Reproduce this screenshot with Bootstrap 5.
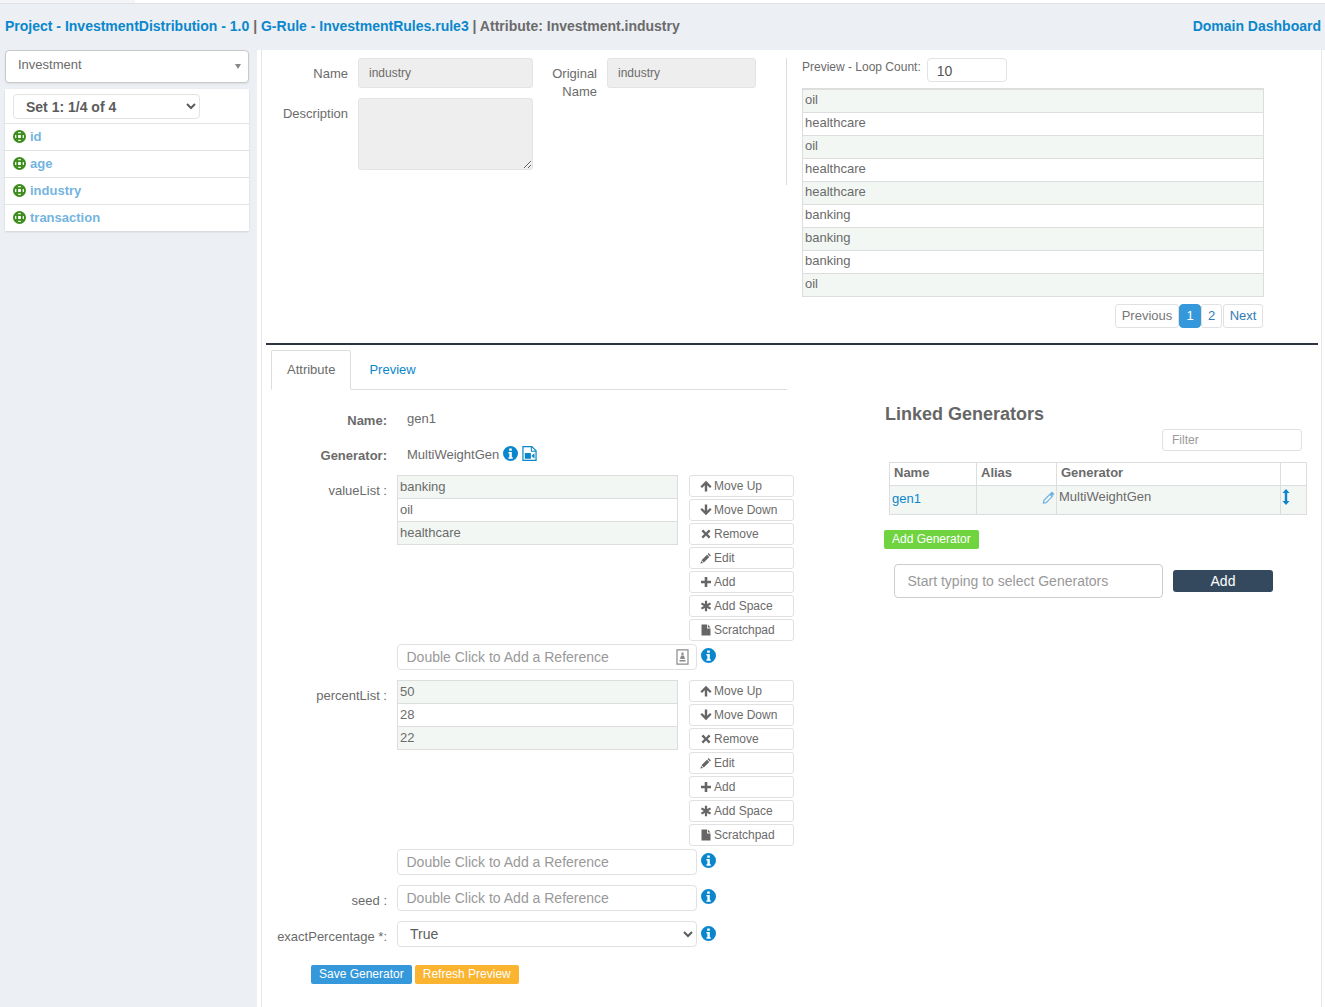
<!DOCTYPE html>
<html lang="en">
<head>
<meta charset="utf-8">
<title>G-Rule</title>
<link rel="stylesheet" href="https://cdn.jsdelivr.net/npm/bootstrap@5.3.0/dist/css/bootstrap.min.css">
<style>
html,body{height:1007px;overflow:hidden}
body{background:#eceff4;font-family:"Liberation Sans",Arial,sans-serif;font-size:13px;color:#6b6b6b;display:flex;flex-direction:column}
a{color:#0a87cc;text-decoration:none}
.strip{height:4px;background:#fff;border-bottom:1px solid #dfe1e4;flex:none}
.strip-tab{width:135px;height:3px;background:#f3f5f8}
.head{height:46px;flex:none;padding:0 4px 2px 5px;font-size:14px;font-weight:700;color:#6b6b6b}
.shell{flex:1;min-height:0}
.side{width:257px;flex:none;padding-left:5px}
.pick{width:244px;height:33px;background:#fff;border:1px solid #c9c9c9;border-radius:4px;padding:0 12px 3px;font-size:13px;box-shadow:0 1px 2px rgba(0,0,0,.08)}
.caret{width:0;height:0;border-left:3px solid transparent;border-right:3px solid transparent;border-top:5px solid #888;margin:3px -5px 0 0}
.attrs{width:244px;margin-top:6px;background:#fff;box-shadow:0 1px 2px rgba(0,0,0,.12)}
.attrs .sel-wrap{height:34px;padding:5px 8px}
.attrs select{width:187px;height:25px;font-size:14px;font-weight:700;color:#5c5c5c;padding:0 0 0 8px;border:1px solid #e3e3e3;border-radius:4px;appearance:auto;background-image:none}
.attr{height:27px;border-top:1px solid #e2e2e2;padding-left:8px;font-weight:700;font-size:13px;gap:4px}
.attr a{color:#74b4e0}
.attr svg{color:#3c8c1c;width:13px;height:13px;margin-top:-2px}
.main{flex:1;background:#fff;padding:0 3px 0 4px;min-width:0}
.inner{height:100%;border-left:1px solid #e7e7e7;border-right:1px solid #e7e7e7}
.top{height:293px;padding-top:8px}
.meta{width:525px;height:127px;border-right:1px solid #ddd;display:grid;grid-template-columns:86px 175px 54px 149px;column-gap:10px;row-gap:10px;grid-template-rows:30px 72px;align-content:start}
.lab{text-align:right;padding-top:7px;line-height:18px}
.ro{background:#eee;border:1px solid #e3e3e3;border-radius:3px;padding:0 10px;font-size:12px;color:#6b6b6b;height:30px;line-height:28px;width:100%}
textarea.ro{height:72px;display:block}
.prev{padding-left:15px;width:477px}
.prev-lab{font-size:12px;gap:6px;height:30px;align-items:flex-start}
.count{width:80px;height:24px;padding:2px 9px 0;font-size:14px;border:1px solid #e3e3e3;border-radius:4px;color:#555}
.dat{width:100%;margin:0;border-collapse:collapse;font-size:13px;color:#6b6b6b;background:#fff}
.dat td{height:23px;padding:0 2px 1px;border:1px solid #ddd;line-height:20px}
.dat tr:nth-child(odd) td{background:#f2f7f4}
.dat tr:first-child td{border-top-width:2px}
.pg{margin:7px 1px 0 0;justify-content:flex-end;--bs-pagination-font-size:13px}
.pg .page-item .page-link{padding:0;height:24px;line-height:22px;border:1px solid #e1e1e1;border-radius:3px;color:#337ab7;margin-left:0;text-align:center}
.pg .disabled .page-link{width:64px}
.pg .page-item.disabled .page-link{color:#777;background:#fff}
.pg .page-item.active .page-link{background:#3498db;border-color:#3498db;color:#fff;border-radius:4px;width:22px}
.pg .page-item.pg-two .page-link{width:21px}
.pg .page-item.pg-next .page-link{margin-left:1px;width:40px}
.rule{height:2px;background:#2b3440;margin:0 3px 0 4px;border:0;opacity:1}
.low{min-height:0}
.left{width:622px;flex:none}
.tabs{margin:5px 0 0 9px;width:516px;border-bottom:1px solid #ddd;height:40px;flex-wrap:nowrap}
.tabs .nav-link{height:40px;padding:0 15px;line-height:38px;font-size:13px;border-radius:2px 2px 0 0}
.tabs .nav-link.active{color:#6b6b6b;border-color:#ddd #ddd #fff}
.tabs .nav-link:not(.active){color:#0a87cc;margin-left:2px}
.frow{display:flex;gap:10px}
.flab{width:125px;flex:none;text-align:right}
.flab.bold{font-weight:700}
.val{padding-left:10px}
.name-row{height:35px;padding-top:21px}
.name-val{margin-top:-2px}
.gen-row{height:50px;padding-top:22px;align-items:flex-start}
.gen-lab{margin-top:-1px}
.gen-val{margin-top:-2px}
.gen-val .inf{margin-top:-2px}
.gen-val .file-ic{height:17px;margin:-3px 0 0 0}
.lab-pad{padding-top:6px}
.lst{width:281px;border-collapse:collapse;font-size:13px}
.lst td{height:23px;padding:0 2px 1px;border:1px solid #ddd;line-height:20px}
.lst tr:nth-child(odd) td{background:#f2f7f4}
.list-btns{width:105px;margin-left:1px;gap:2px}
.mv{height:22px;width:105px;padding:0 0 1px 10px;font-size:12px;line-height:20px;color:#6b6b6b;border:1px solid #e1e1e1;border-radius:3px;background:#fff;text-align:left;display:flex;align-items:center;gap:2px}
.mv svg{width:12px;height:12px;color:#666;flex:none}
.mt3{margin-top:3px}
.mt10{margin-top:10px}
.ref-wrap{width:300px}
.ref{height:26px;width:300px;padding:0 8.500px;font-size:14px;border:1px solid #e1e1e1;border-radius:4px}
.ref::placeholder,.typ::placeholder{color:#999;opacity:1}
.inf{width:15px;height:15px;color:#0a87cc;flex:none}
.inf.side-inf{margin:4px 0 0 -6px}
.inf.side-inf.low-inf{margin-top:5px}
.card-ic{position:absolute;right:8px;top:5px;width:13px;height:16px;color:#8a8a8a}
.sel{width:300px;height:26px;padding:0 0 0 8px;font-size:14px;color:#5c5c5c;border:1px solid #e1e1e1;border-radius:4px;appearance:auto;background-image:none}
.act{margin:18px 0 0 49px;gap:3px}
.tb{height:19px;padding:0 7px;line-height:17px;font-size:12px;border-radius:2px;color:#fff;border:1px solid transparent}
.b-blue{background:#3498db}.b-or{background:#fbb430}.b-gr{background:#6fd43f}
.right{width:433px;padding-top:45px}
.rt-title{font-size:18px;font-weight:700;color:#666;margin:0;line-height:20px;padding:14px 0 0 1px}
.filter{width:140px;height:22px;font-size:12px;padding:0 9px;border:1px solid #e1e1e1;border-radius:3px;margin:5px 0 0 278px;display:block}
.filter::placeholder{color:#999;opacity:1}
.gt{width:418px;margin:11px 0 0 5px;border-collapse:collapse;table-layout:fixed;font-size:13px}
.gt th,.gt td{border:1px solid #ddd;padding:0 0 0 4px}
.gt th{height:23px;font-weight:700;padding-bottom:2px}
.gt td{height:29px;background:#f2f7f4;vertical-align:top;padding-top:1px}
.gt .nm{vertical-align:middle;padding:0 0 2px 2px}
.gt .gn{padding-left:2px}
.gt .ar{padding:2px 0 0 1px}
.gt .al{position:relative}
.pen{position:absolute;right:1px;top:5px;width:13px;height:13px;color:#6eb2e2}
.ud{width:8px;height:16px;color:#0a87cc;display:block;margin-top:1px}
.col-a{width:87px}.col-b{width:80px}.col-c{width:224px}.col-d{width:26px}
.mt-gr{margin-top:15px}
.typ-row{margin:15px 0 0 10px}
.typ{width:269px;height:34px;font-size:14px;padding:0 12.500px;border:1px solid #ccc;border-radius:4px}
.addb{width:100px;height:22px;background:#34495e;color:#fff;font-size:14px;line-height:20px;padding:0;border:0;border-radius:3px;margin-left:10px}
</style>
</head>
<body>
<svg width="0" height="0" class="position-absolute">
<defs>
<symbol id="i-info" viewBox="0 0 16 16"><path fill="currentColor" fill-rule="evenodd" d="M8 0a8 8 0 1 0 0 16A8 8 0 0 0 8 0zM6.600 2.600h2.800v2.500H6.600zM5.800 6.300h3.600v5.600h1v1.600H5.800v-1.600h1V7.900h-1z"/></symbol>
<symbol id="i-ring" viewBox="0 0 16 16"><g fill="none" stroke="currentColor"><circle cx="8" cy="8" r="6.800" stroke-width="2.400"/><path stroke-width="2.200" d="M2.500 5.200h11M2.500 10.800h11M5.200 2.500v11M10.800 2.500v11"/></g></symbol>
<symbol id="i-filevid" viewBox="0 0 16 16"><path fill="none" stroke="currentColor" stroke-width="1.300" d="M1 .7h9.500L15 5v10.300H1z"/><path fill="none" stroke="currentColor" stroke-width="1.100" d="M10 1v4.500h5"/><path fill="currentColor" d="M3 7.500h6.500v6H3zM10.300 10l3-2.300v5.600l-3-2.300z"/></symbol>
<symbol id="i-up" viewBox="0 0 12 12"><path fill="currentColor" d="M6 .8 11.600 6.400 10 8 7.200 5.200V11.400H4.800V5.200L2 8 .4 6.400z"/></symbol>
<symbol id="i-down" viewBox="0 0 12 12"><path fill="currentColor" d="M6 11.200.4 5.600 2 4 4.800 6.800V.6h2.400v6.200L10 4l1.600 1.600z"/></symbol>
<symbol id="i-x" viewBox="0 0 12 12"><path fill="currentColor" d="M3.200 1.600 6 4.400l2.800-2.800 1.700 1.700L7.700 6l2.800 2.700-1.700 1.700L6 7.600 3.200 10.400 1.500 8.700 4.300 6 1.500 3.300z"/></symbol>
<symbol id="i-pen" viewBox="0 0 12 12"><path fill="currentColor" d="M8.600 1.100 10.900 3.400 9.900 4.400 7.600 2.100zM7 2.700 9.300 5 3.800 10.500 1.500 8.200zM1.100 8.900 3.100 10.900.4 11.600z"/></symbol>
<symbol id="i-plus" viewBox="0 0 12 12"><path fill="currentColor" d="M4.700 1h2.600v3.700H11v2.600H7.300V11H4.700V7.300H1V4.700h3.700z"/></symbol>
<symbol id="i-ast" viewBox="0 0 12 12"><path fill="currentColor" d="M4.900.8h2.200v3.300l2.900-1.700 1.100 1.900L8.200 6l2.900 1.700L10 9.600 7.100 7.900v3.300H4.900V7.900L2 9.600.9 7.700 3.800 6 .9 4.300 2 2.400l2.900 1.700z"/></symbol>
<symbol id="i-file" viewBox="0 0 12 12"><path fill="currentColor" d="M1.500.5h5.500v4h3.500v7h-9zM7.800.5l2.700 3H7.800z"/></symbol>
<symbol id="i-card" viewBox="0 0 13 16"><path fill="none" stroke="currentColor" stroke-width="1.200" d="M1 .8h11v14.400H1z"/><path fill="currentColor" d="M5.500 3.500h2v2.500h-2zM5 6.500h3l1 3.500H4zM3.500 11h6v1.600h-6z"/></symbol>
<symbol id="i-pencil2" viewBox="0 0 14 14"><path fill="none" stroke="currentColor" stroke-width="1.300" d="M8.500 3.500l2.500 2.500-6.500 6.500-3 .5.500-3z"/><path fill="currentColor" d="M10.700.6l2.700 2.700-2.200 2.200-2.700-2.700z"/></symbol>
<symbol id="i-ud" viewBox="0 0 8 16"><path fill="currentColor" d="M4 0 7.500 4H5.200v8h2.300L4 16 .5 12h2.300V4H.5z"/></symbol>
</defs>
</svg>

<div class="strip"><div class="strip-tab"></div></div>
<div class="head d-flex justify-content-between align-items-center">
  <div><a href="#">Project - InvestmentDistribution - 1.0</a> | <a href="#">G-Rule - InvestmentRules.rule3</a> | Attribute: Investment.industry</div>
  <a href="#">Domain Dashboard</a>
</div>
<div class="shell d-flex">
  <aside class="side">
    <div class="pick d-flex align-items-center justify-content-between"><span>Investment</span><span class="caret"></span></div>
    <div class="attrs">
      <div class="sel-wrap"><select class="form-select"><option>Set 1: 1/4 of 4</option></select></div>
      <div class="attr d-flex align-items-center"><svg><use href="#i-ring"/></svg><a href="#">id</a></div>
      <div class="attr d-flex align-items-center"><svg><use href="#i-ring"/></svg><a href="#">age</a></div>
      <div class="attr d-flex align-items-center"><svg><use href="#i-ring"/></svg><a href="#">industry</a></div>
      <div class="attr d-flex align-items-center"><svg><use href="#i-ring"/></svg><a href="#">transaction</a></div>
    </div>
  </aside>
  <main class="main">
    <div class="inner d-flex flex-column">
      <section class="top d-flex">
        <div class="meta">
          <label class="lab">Name</label><input class="ro" value="industry" readonly>
          <label class="lab">Original Name</label><input class="ro" value="industry" readonly>
          <label class="lab">Description</label><textarea class="ro" readonly></textarea>
        </div>
        <div class="prev">
          <div class="prev-lab d-flex"><span>Preview - Loop Count:</span><input class="count" value="10"></div>
          <table class="dat"><tbody>
            <tr><td>oil</td></tr><tr><td>healthcare</td></tr><tr><td>oil</td></tr><tr><td>healthcare</td></tr><tr><td>healthcare</td></tr><tr><td>banking</td></tr><tr><td>banking</td></tr><tr><td>banking</td></tr><tr><td>oil</td></tr>
          </tbody></table>
          <ul class="pagination pg">
            <li class="page-item disabled"><a class="page-link" href="#">Previous</a></li>
            <li class="page-item active"><a class="page-link" href="#">1</a></li>
            <li class="page-item pg-two"><a class="page-link" href="#">2</a></li>
            <li class="page-item pg-next"><a class="page-link" href="#">Next</a></li>
          </ul>
        </div>
      </section>
      <hr class="rule">
      <section class="low d-flex">
        <div class="left">
          <ul class="nav nav-tabs tabs">
            <li class="nav-item"><a class="nav-link active" href="#">Attribute</a></li>
            <li class="nav-item"><a class="nav-link" href="#">Preview</a></li>
          </ul>
          <div class="frow name-row"><div class="flab bold">Name:</div><div class="val name-val">gen1</div></div>
          <div class="frow gen-row"><div class="flab bold gen-lab">Generator:</div><div class="val gen-val d-flex align-items-center gap-1">MultiWeightGen <svg class="inf"><use href="#i-info"/></svg><svg class="inf file-ic"><use href="#i-filevid"/></svg></div></div>

          <div class="frow"><div class="flab lab-pad">valueList :</div>
            <table class="lst align-self-start"><tbody><tr><td>banking</td></tr><tr><td>oil</td></tr><tr><td>healthcare</td></tr></tbody></table>
            <div class="list-btns d-flex flex-column">
              <button class="btn mv"><svg><use href="#i-up"/></svg>Move Up</button>
              <button class="btn mv"><svg><use href="#i-down"/></svg>Move Down</button>
              <button class="btn mv"><svg><use href="#i-x"/></svg>Remove</button>
              <button class="btn mv"><svg><use href="#i-pen"/></svg>Edit</button>
              <button class="btn mv"><svg><use href="#i-plus"/></svg>Add</button>
              <button class="btn mv"><svg><use href="#i-ast"/></svg>Add Space</button>
              <button class="btn mv"><svg><use href="#i-file"/></svg>Scratchpad</button>
            </div>
          </div>
          <div class="frow mt3"><div class="flab"></div><div class="ref-wrap position-relative"><input class="form-control ref" placeholder="Double Click to Add a Reference"><svg class="card-ic"><use href="#i-card"/></svg></div><svg class="inf side-inf"><use href="#i-info"/></svg></div>

          <div class="frow mt10"><div class="flab lab-pad">percentList :</div>
            <table class="lst align-self-start"><tbody><tr><td>50</td></tr><tr><td>28</td></tr><tr><td>22</td></tr></tbody></table>
            <div class="list-btns d-flex flex-column">
              <button class="btn mv"><svg><use href="#i-up"/></svg>Move Up</button>
              <button class="btn mv"><svg><use href="#i-down"/></svg>Move Down</button>
              <button class="btn mv"><svg><use href="#i-x"/></svg>Remove</button>
              <button class="btn mv"><svg><use href="#i-pen"/></svg>Edit</button>
              <button class="btn mv"><svg><use href="#i-plus"/></svg>Add</button>
              <button class="btn mv"><svg><use href="#i-ast"/></svg>Add Space</button>
              <button class="btn mv"><svg><use href="#i-file"/></svg>Scratchpad</button>
            </div>
          </div>
          <div class="frow mt3"><div class="flab"></div><div class="ref-wrap"><input class="form-control ref" placeholder="Double Click to Add a Reference"></div><svg class="inf side-inf"><use href="#i-info"/></svg></div>
          <div class="frow mt10"><div class="flab lab-pad">seed :</div><div class="ref-wrap"><input class="form-control ref" placeholder="Double Click to Add a Reference"></div><svg class="inf side-inf"><use href="#i-info"/></svg></div>
          <div class="frow mt10"><div class="flab lab-pad">exactPercentage *:</div><div class="ref-wrap"><select class="form-select sel"><option>True</option></select></div><svg class="inf side-inf low-inf"><use href="#i-info"/></svg></div>
          <div class="act d-flex"><button class="btn tb b-blue">Save Generator</button><button class="btn tb b-or">Refresh Preview</button></div>
        </div>
        <div class="right">
          <h5 class="rt-title">Linked Generators</h5>
          <input class="form-control filter" placeholder="Filter">
          <table class="gt">
            <colgroup><col class="col-a"><col class="col-b"><col class="col-c"><col class="col-d"></colgroup>
            <thead><tr><th>Name</th><th>Alias</th><th>Generator</th><th></th></tr></thead>
            <tbody><tr><td class="nm"><a href="#">gen1</a></td><td class="al"><svg class="pen"><use href="#i-pencil2"/></svg></td><td class="gn">MultiWeightGen</td><td class="ar"><svg class="ud"><use href="#i-ud"/></svg></td></tr></tbody>
          </table>
          <button class="btn tb b-gr d-block mt-gr">Add Generator</button>
          <div class="d-flex align-items-center typ-row"><input class="form-control typ" placeholder="Start typing to select Generators"><button class="btn addb">Add</button></div>
        </div>
      </section>
    </div>
  </main>
</div>
</body>
</html>
